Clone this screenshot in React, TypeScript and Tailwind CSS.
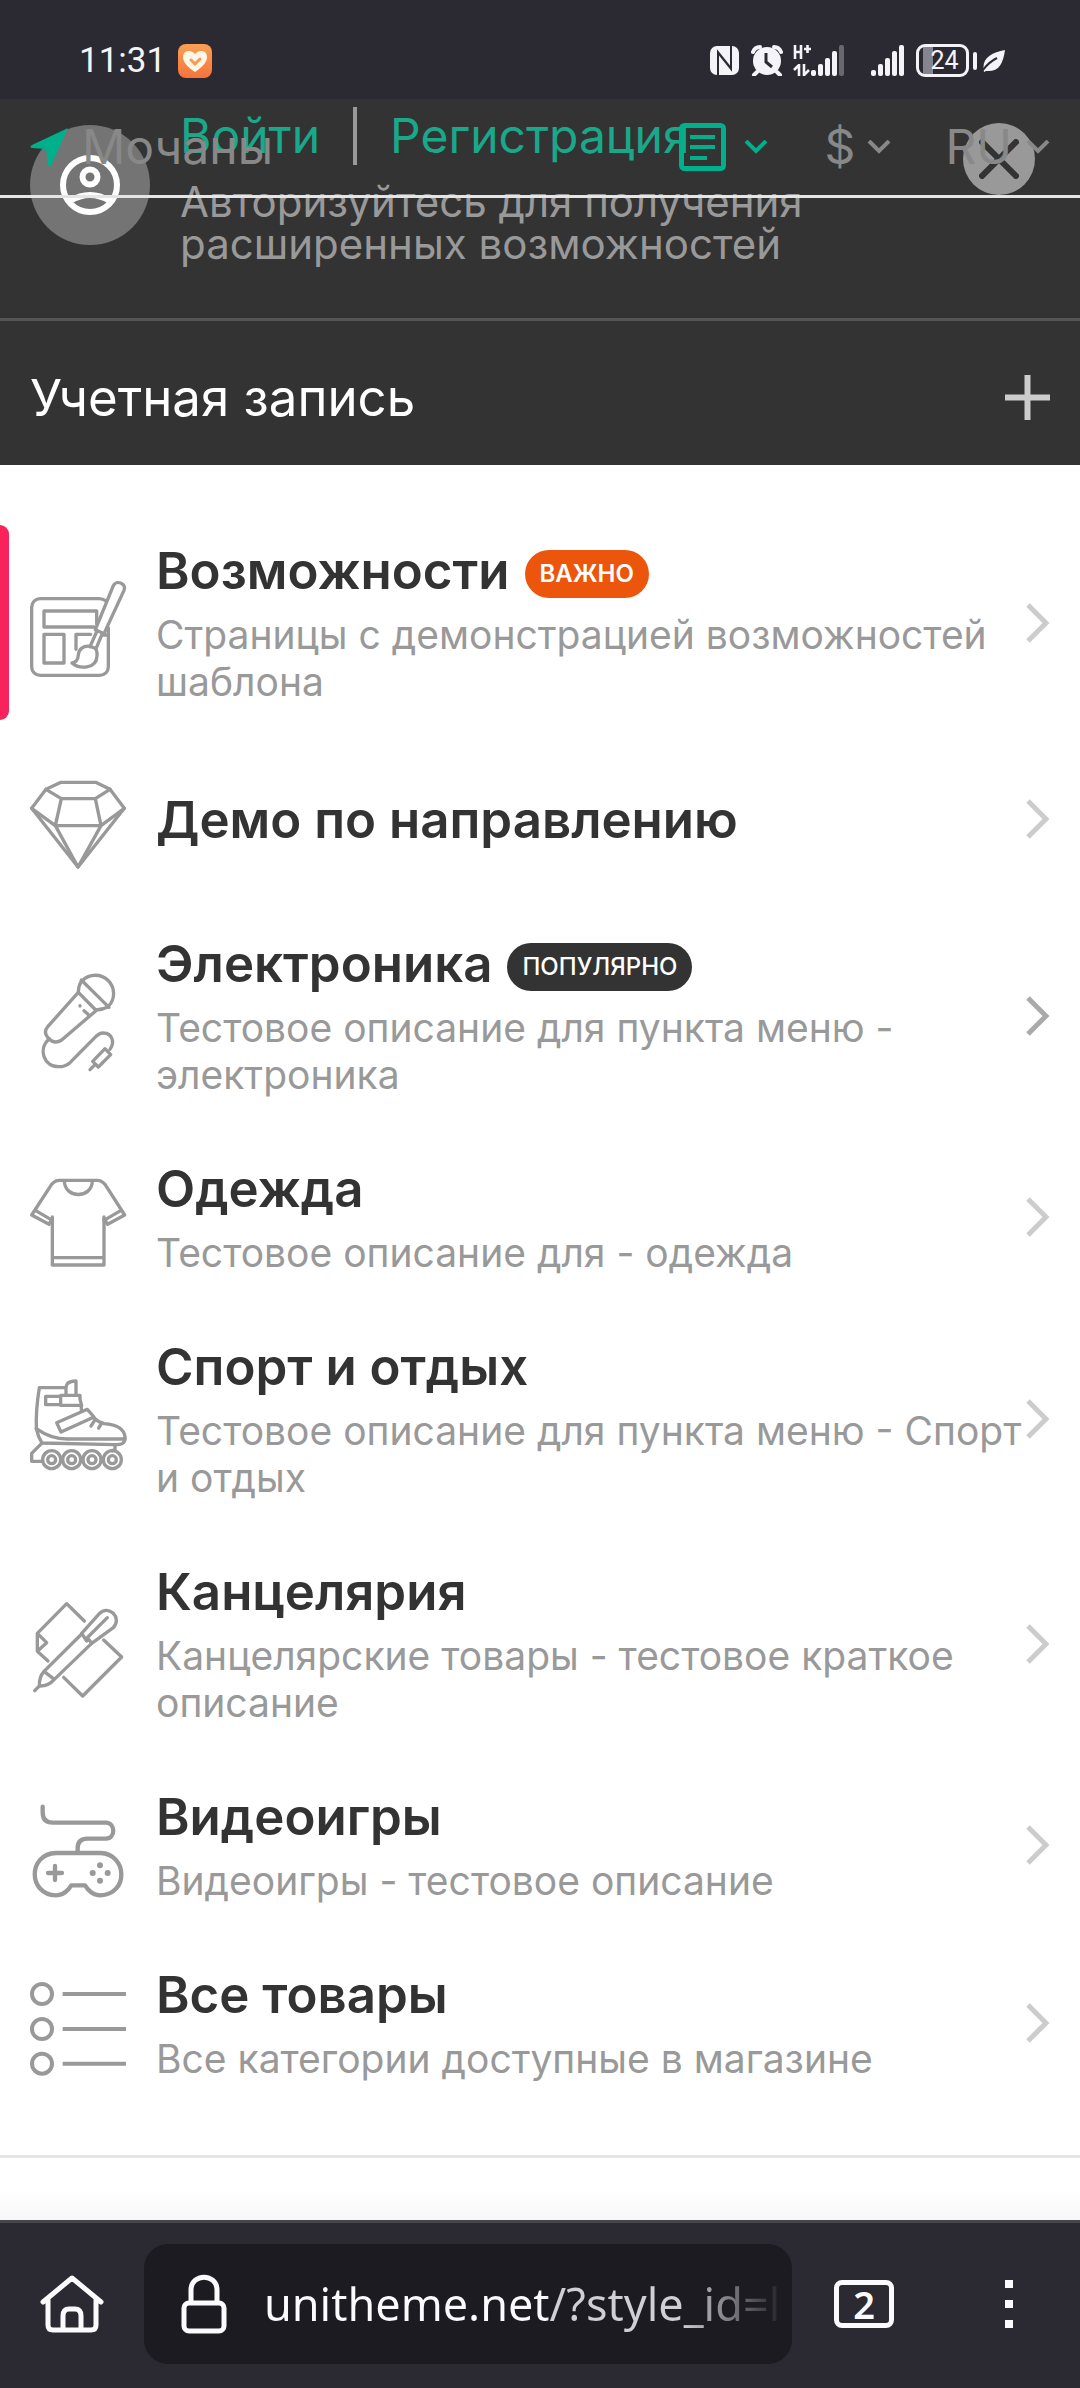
import type { ReactNode } from 'react';

type Item = {
  title: string;
  text?: string;
  badge?: { label: string; tone: 'important' | 'popular' };
  icon: ReactNode;
  active?: boolean;
  dark?: boolean;
};

function MenuIcon({ children, width = 10 }: { children: ReactNode; width?: number }) {
  return (
    <svg
      viewBox="0 0 288 288"
      className="mt-3 size-24 shrink-0 overflow-visible text-[#999]"
      fill="none"
      stroke="currentColor"
      strokeWidth={width}
      strokeLinejoin="round"
      strokeLinecap="round"
      aria-hidden="true"
    >
      {children}
    </svg>
  );
}

const items: Item[] = [
  {
    title: 'Возможности',
    text: 'Страницы с демонстрацией возможностей шаблона',
    badge: { label: 'ВАЖНО', tone: 'important' },
    active: true,
    icon: (
      <MenuIcon>
        <path d="M228 60C222 55 215 53 207 53H31C16 53 5 64 5 79V257C5 272 16 283 31 283H209C224 283 235 272 235 257V140" />
        <path d="M200 128V90H42V138H192" />
        <path d="M42 160H102V246H42Z" />
        <path d="M182 160H138V205M218 162H232" />
        <path d="M250 14C254 5 264 3 272 6C281 10 286 18 282 28L222 158L196 146Z" />
        <path d="M201 150L180 197M217 158L198 203" />
        <path d="M180 196C160 193 146 205 145 222C144 237 137 244 126 246C146 264 200 266 201 224C202 212 199 205 194 201Z" />
      </MenuIcon>
    ),
  },
  {
    title: 'Демо по направлению',
    icon: (
      <MenuIcon>
        <path d="M5 94L48 37L93 16H197L240 37L283 94L144 270Z" />
        <path d="M48 37L94 65H196L240 37M94 65L76 146H213L196 65M5 94L76 146L144 270L213 146L283 94" />
      </MenuIcon>
    ),
  },
  {
    title: 'Электроника',
    text: 'Тестовое описание для пункта меню - электроника',
    badge: { label: 'ПОПУЛЯРНО', tone: 'popular' },
    dark: true,
    icon: (
      <MenuIcon>
        <path d="M157 20A54 54 0 1 1 235 97" />
        <path d="M154 18L237 100" />
        <path d="M155 20Q145 36 145 55L197 108Q218 107 235 98" />
        <path d="M145 55L54 157Q39 174 53 190Q72 213 95 198L198 110" />
        <path d="M150 95V96M162 110L174 121" />
        <path d="M58 194C22 226 42 278 86 278Q106 278 120 266L195 190Q208 176 221 177C245 178 256 203 240 226" />
        <path d="M225 224L242 242L205 279L188 262ZM195 272L180 287" />
      </MenuIcon>
    ),
  },
  {
    title: 'Одежда',
    text: 'Тестовое описание для - одежда',
    icon: (
      <MenuIcon>
        <path d="M67 126V270H222V126M67 248H222" />
        <path d="M67 130L57 148L5 120L61 34Q71 17 86 16H203Q219 17 229 34L284 120L233 148L222 130" />
        <path d="M16 106L67 136M273 106L222 136M103 18C104 72 186 72 187 18" />
      </MenuIcon>
    ),
  },
  {
    title: 'Спорт и отдых',
    text: 'Тестовое описание для пункта меню - Спорт и отдых',
    icon: (
      <MenuIcon>
        {[65, 125, 186, 247].map((x) => (
          <g key={x}>
            <circle cx={x} cy="248" r="27" />
            <circle cx={x} cy="248" r="12" />
          </g>
        ))}
        <path d="M36 253H5V229L35 199M255 203V217L247 221" />
        <path d="M107 32H28Q17 100 19 155Q24 180 36 198L252 203C276 203 286 200 285 180C282 152 252 142 222 140Q205 136 192 123" />
        <path d="M19 155Q62 186 112 186H285" />
        <path d="M108 52V30Q110 12 138 12V55M92 58H47V83H92M92 55H150V67L155 85H92ZM154 87V100" />
        <path d="M80 137L172 97L192 120L93 165ZM183 147L194 130M206 153L216 137" />
      </MenuIcon>
    ),
  },
  {
    title: 'Канцелярия',
    text: 'Канцелярские товары - тестовое краткое описание',
    icon: (
      <MenuIcon>
        <path d="M163 57L110 5L22 94V148L54 177M22 94L50 122L22 148" />
        <path d="M221 114L275 165L158 282L101 226" />
        <path d="M155 94L208 35C235 6 278 47 250 77L185 124L176 112L170 117L163 106Z" />
        <path d="M232 47L168 111" />
        <path d="M155 96L42 208Q27 225 28 252Q55 253 73 232L185 124M42 208L73 232M28 252L14 266" />
      </MenuIcon>
    ),
  },
  {
    title: 'Видеоигры',
    text: 'Видеоигры - тестовое описание',
    icon: (
      <MenuIcon width={13}>
        <path d="M38 11V28Q38 59 68 59H228C257 60 257 107 228 107H172Q143 107 143 136V148" />
        <path d="M78 150H211C293 153 297 274 211 277Q190 277 173 258L165 247H124L116 258Q99 277 78 277C-7 274 -7 153 78 150Z" />
        <path d="M75 189V231M54 210H96" />
        <g fill="currentColor" stroke="none">
          <circle cx="210" cy="187" r="9" />
          <circle cx="188" cy="210" r="9" />
          <circle cx="233" cy="210" r="9" />
          <circle cx="210" cy="233" r="9" />
        </g>
      </MenuIcon>
    ),
  },
  {
    title: 'Все товары',
    text: 'Все категории доступные в магазине',
    icon: (
      <MenuIcon width={12}>
        {[39, 144, 248].map((y) => (
          <g key={y}>
            <circle cx="36" cy={y} r="30" />
            <path d={`M98 ${y}H288`} strokeLinecap="butt" />
          </g>
        ))}
      </MenuIcon>
    ),
  },
];

function SignalBars({ fade = false }: { fade?: boolean }) {
  return (
    <svg viewBox="0 0 33 32" className="h-8 w-[33px]" fill="currentColor" aria-hidden="true">
      <rect x="0" y="25" width="5" height="6" rx="2" />
      <rect x="7" y="19" width="5" height="12" rx="2" />
      <rect x="14" y="13" width="5" height="18" rx="2" />
      <rect x="21" y="6" width="5" height="25" rx="2" />
      <rect x="28" y="0" width="5" height="31" rx="2" opacity={fade ? 0.3 : 1} />
    </svg>
  );
}

function StatusBar() {
  return (
    <div className="flex h-[99px] items-center bg-[#2b2a33] pt-[22px] pr-[75px] pl-[79px] text-[#f4f4f8]">
      <time className="font-[Roboto] text-[35px] leading-10">11:31</time>
      <svg viewBox="0 0 34 34" className="ml-3 size-[34px]" aria-hidden="true">
        <defs>
          <linearGradient id="app" x1="0" y1="0" x2="0" y2="1">
            <stop offset="0" stopColor="#f9a055" />
            <stop offset="1" stopColor="#f4743b" />
          </linearGradient>
        </defs>
        <rect width="34" height="34" rx="8" fill="url(#app)" />
        <path d="M17 28C11 24 5 19 5 13C5 6 13 5 17 10C21 5 29 6 29 13C29 19 23 24 17 28Z" fill="#fff6e8" />
        <path d="M13 16L17 20L22 15" fill="none" stroke="#f59a52" strokeWidth="3" strokeLinecap="round" />
      </svg>
      <div className="ml-auto flex items-center">
        <svg viewBox="0 0 29 29" className="size-[29px]" aria-hidden="true">
          <rect width="29" height="29" rx="7" fill="currentColor" />
          <path d="M8 29V6L20 21M21 0V23L9 8" fill="none" stroke="#2b2a33" strokeWidth="2" />
        </svg>
        <svg viewBox="0 0 32 31" className="ml-3 h-[31px] w-8" aria-hidden="true">
          <circle cx="16" cy="16" r="14" fill="currentColor" />
          <path d="M2 7Q4 2 9 2M30 7Q28 2 23 2M6 27L3 30M26 27L29 30" stroke="currentColor" strokeWidth="4" strokeLinecap="round" fill="none" />
          <path d="M15 8V17L21 22" fill="none" stroke="#2b2a33" strokeWidth="3" />
        </svg>
        <svg viewBox="0 0 18 32" className="ml-2.5 h-8 w-[18px]" fill="none" stroke="currentColor" strokeWidth="2.6" aria-hidden="true">
          <path d="M2 0V14M8 0V14M2 7H8M11 4H18M14.500 0V8" />
          <path d="M6 19V31M6 20L1 25M11 19V31M11 30L16 25" />
        </svg>
        <SignalBars fade />
        <div className="w-[27px]" />
        <SignalBars />
        <div className="ml-3 flex h-[33px] w-[53px] items-center rounded-[9px] border-3 border-current bg-[linear-gradient(90deg,transparent_4px,#85858f_4px,#85858f_14px,transparent_14px)] bg-clip-padding text-center font-[Roboto] text-[25px] leading-6">
          <span className="w-full pl-1">24</span>
        </div>
        <div className="ml-1 h-[18px] w-1 rounded-sm bg-current" />
        <svg viewBox="0 0 22 22" className="ml-1.5 size-[22px]" aria-hidden="true">
          <path d="M22 0C20 14 16 22 3 21L1 22C-2 8 8 3 22 0Z" fill="currentColor" />
          <path d="M0 20Q6 12 14 8" fill="none" stroke="#2b2a33" strokeWidth="2" />
        </svg>
      </div>
    </div>
  );
}

function Caret() {
  return (
    <svg viewBox="0 0 24 14" className="h-3.5 w-6" fill="none" stroke="currentColor" strokeWidth="4" aria-hidden="true">
      <path d="M2 1L12 11L22 1" />
    </svg>
  );
}

function TopBar() {
  return (
    <div className="absolute inset-x-0 top-0 flex h-[99px] items-center border-b-3 border-[#e5e5e5] px-[30px] text-5xl leading-[58px] text-[#888]">
      <a href="#city" className="flex items-center gap-3.5">
        <svg viewBox="0 0 38 39" className="h-[39px] w-[38px] fill-[#00b08c]" aria-hidden="true">
          <path d="M38 0L21 38Q19 40 18 37L16 21L2 20Q-1 19 2 17Z" />
        </svg>
        Мочаны
      </a>
      <button type="button" aria-label="Каталог" className="ml-auto flex items-center gap-[18px] text-[#00b08c]">
        <svg viewBox="0 0 47 48" className="h-12 w-[47px]" fill="none" stroke="currentColor" strokeWidth="4" aria-hidden="true">
          <rect x="2.500" y="2.500" width="42" height="43" rx="3" strokeWidth="5" />
          <path d="M11 14H36M11 24H36M11 35H28" />
        </svg>
        <Caret />
      </button>
      <button type="button" className="ml-[57px] flex items-center gap-3">
        $<Caret />
      </button>
      <button type="button" className="ml-[54px] flex items-center gap-3.5">
        RU
        <Caret />
      </button>
    </div>
  );
}

function Account() {
  return (
    <header className="relative bg-[#333]">
      <div className="flex items-start border-b-3 border-[#555] px-[30px] pt-2 pb-[53px]">
        <div className="mt-[18px] flex size-[120px] shrink-0 items-center justify-center rounded-full bg-[#747474]">
          <svg viewBox="0 0 60 60" className="size-[60px]" fill="none" stroke="#fff" strokeWidth="6" aria-hidden="true">
            <circle cx="30" cy="30" r="27" />
            <circle cx="30" cy="22" r="7.500" />
            <path d="M10 46Q30 34 50 46" />
          </svg>
        </div>
        <div className="ml-[30px] flex-1">
          <div className="flex items-center text-5xl leading-[58px] text-[#1aa88a]">
            <a href="#login">Войти</a>
            <span className="mx-[33px] h-[58px] w-1 bg-[#999]" />
            <a href="#register">Регистрация</a>
          </div>
          <p className="mt-4 max-w-[680px] text-[42px] leading-[42px] text-[#999]">
            Авторизуйтесь для получения расширенных возможностей
          </p>
        </div>
        <button
          type="button"
          aria-label="Закрыть"
          className="mt-4 mr-[15px] flex size-[72px] items-center justify-center rounded-full bg-[#999]"
        >
          <svg viewBox="0 0 40 40" className="size-10" stroke="#333" strokeWidth="6" aria-hidden="true">
            <path d="M1 1L39 39M39 1L1 39" />
          </svg>
        </button>
      </div>
      <TopBar />
      <button type="button" className="flex h-36 w-full items-center justify-between px-[30px] pt-2 text-[51px] leading-[61px] text-white">
        Учетная запись
        <svg viewBox="0 0 45 45" className="size-[45px]" stroke="#ccc" strokeWidth="6" aria-hidden="true">
          <path d="M22.500 0V45M0 22.500H45" />
        </svg>
      </button>
    </header>
  );
}

function MenuRow({ item }: { item: Item }) {
  return (
    <li>
      <a href="#category" className="relative flex min-h-[137px] items-center py-[15px] pr-[54px] pl-[30px]">
        {item.active && <span className="absolute inset-y-0 left-0 w-[9px] rounded-r-[9px] bg-[#f9235c]" />}
        {item.icon}
        <div className="ml-[30px] min-w-0 flex-1">
          <div className="flex items-center gap-[15px] text-[51px] leading-[61px] font-semibold text-[#333]">
            {item.title}
            {item.badge && (
              <span
                className={
                  item.badge.tone === 'important'
                    ? 'mt-1.5 rounded-full bg-[#ec560c] px-[15px] text-2xl leading-[48px] font-semibold text-white'
                    : 'mt-1.5 rounded-full bg-[#333] px-[15px] text-2xl leading-[48px] font-medium text-white'
                }
              >
                {item.badge.label}
              </span>
            )}
          </div>
          {item.text && <p className="mt-2.5 text-[39px] leading-[47px] text-[#999]">{item.text}</p>}
        </div>
        <svg
          viewBox="0 0 24 40"
          className={item.dark ? 'absolute right-[30px] h-10 w-6 text-[#aaa]' : 'absolute right-[30px] h-10 w-6 text-[#ccc]'}
          fill="none"
          stroke="currentColor"
          strokeWidth="5"
          aria-hidden="true"
        >
          <path d="M2 2L20 20L2 38" />
        </svg>
      </a>
    </li>
  );
}

function BrowserBar() {
  return (
    <footer className="flex items-center border-t-3 border-[#45474a] bg-[#2b2a33] pt-[21px] pr-[67px] pb-6 pl-10 text-[#fbfbfe]">
      <button type="button" aria-label="Домой" className="shrink-0">
        <svg viewBox="0 0 64 60" className="h-[60px] w-16" fill="none" stroke="currentColor" strokeWidth="5" strokeLinejoin="round" strokeLinecap="round" aria-hidden="true">
          <path d="M3 28L32 4L61 28M8 26V51Q8 56 13 56H51Q56 56 56 51V26M23 55V42Q23 35 29 35H35Q41 35 41 42V55" />
        </svg>
      </button>
      <button type="button" className="ml-10 flex h-[120px] min-w-0 flex-1 items-center rounded-3xl bg-[#1c1b22] pr-1.5 pl-[37px] text-left">
        <svg viewBox="0 0 46 60" className="h-[60px] w-[46px] shrink-0" fill="none" stroke="currentColor" strokeWidth="5" aria-hidden="true">
          <rect x="3" y="29" width="40" height="28" rx="5" />
          <path d="M10 29V16C10 -1 36 -1 36 16V29" />
        </svg>
        <span className="ml-[37px] min-w-0 flex-1 overflow-hidden bg-[linear-gradient(90deg,#fbfbfe_54%,#cfcfd4_55%,#cfcfd4_80%,transparent)] bg-clip-text font-['Noto_Sans'] text-[45px] leading-[60px] whitespace-nowrap text-transparent">
          unitheme.net/?style_id=l
        </span>
      </button>
      <button
        type="button"
        aria-label="Вкладки: 2"
        className="ml-[42px] flex h-12 w-[60px] shrink-0 items-center justify-center rounded-lg border-5 border-current font-['Noto_Sans'] text-[38px] leading-9 font-semibold"
      >
        2
      </button>
      <button type="button" aria-label="Меню" className="ml-[111px] flex shrink-0 flex-col gap-3">
        <span className="size-2 bg-current" />
        <span className="size-2 bg-current" />
        <span className="size-2 bg-current" />
      </button>
    </footer>
  );
}

export default function App() {
  return (
    <div className="flex min-h-screen flex-col bg-white font-[Inter,sans-serif]">
      <StatusBar />
      <Account />
      <nav className="border-b-3 border-[#e5e5e5] pt-[60px] pb-[58px]">
        <ul className="flex flex-col gap-[30px]">
          {items.map((item) => (
            <MenuRow key={item.title} item={item} />
          ))}
        </ul>
      </nav>
      <div className="min-h-[60px] flex-1 bg-linear-to-b from-white from-50% to-[#f7f7f7]" />
      <BrowserBar />
    </div>
  );
}
